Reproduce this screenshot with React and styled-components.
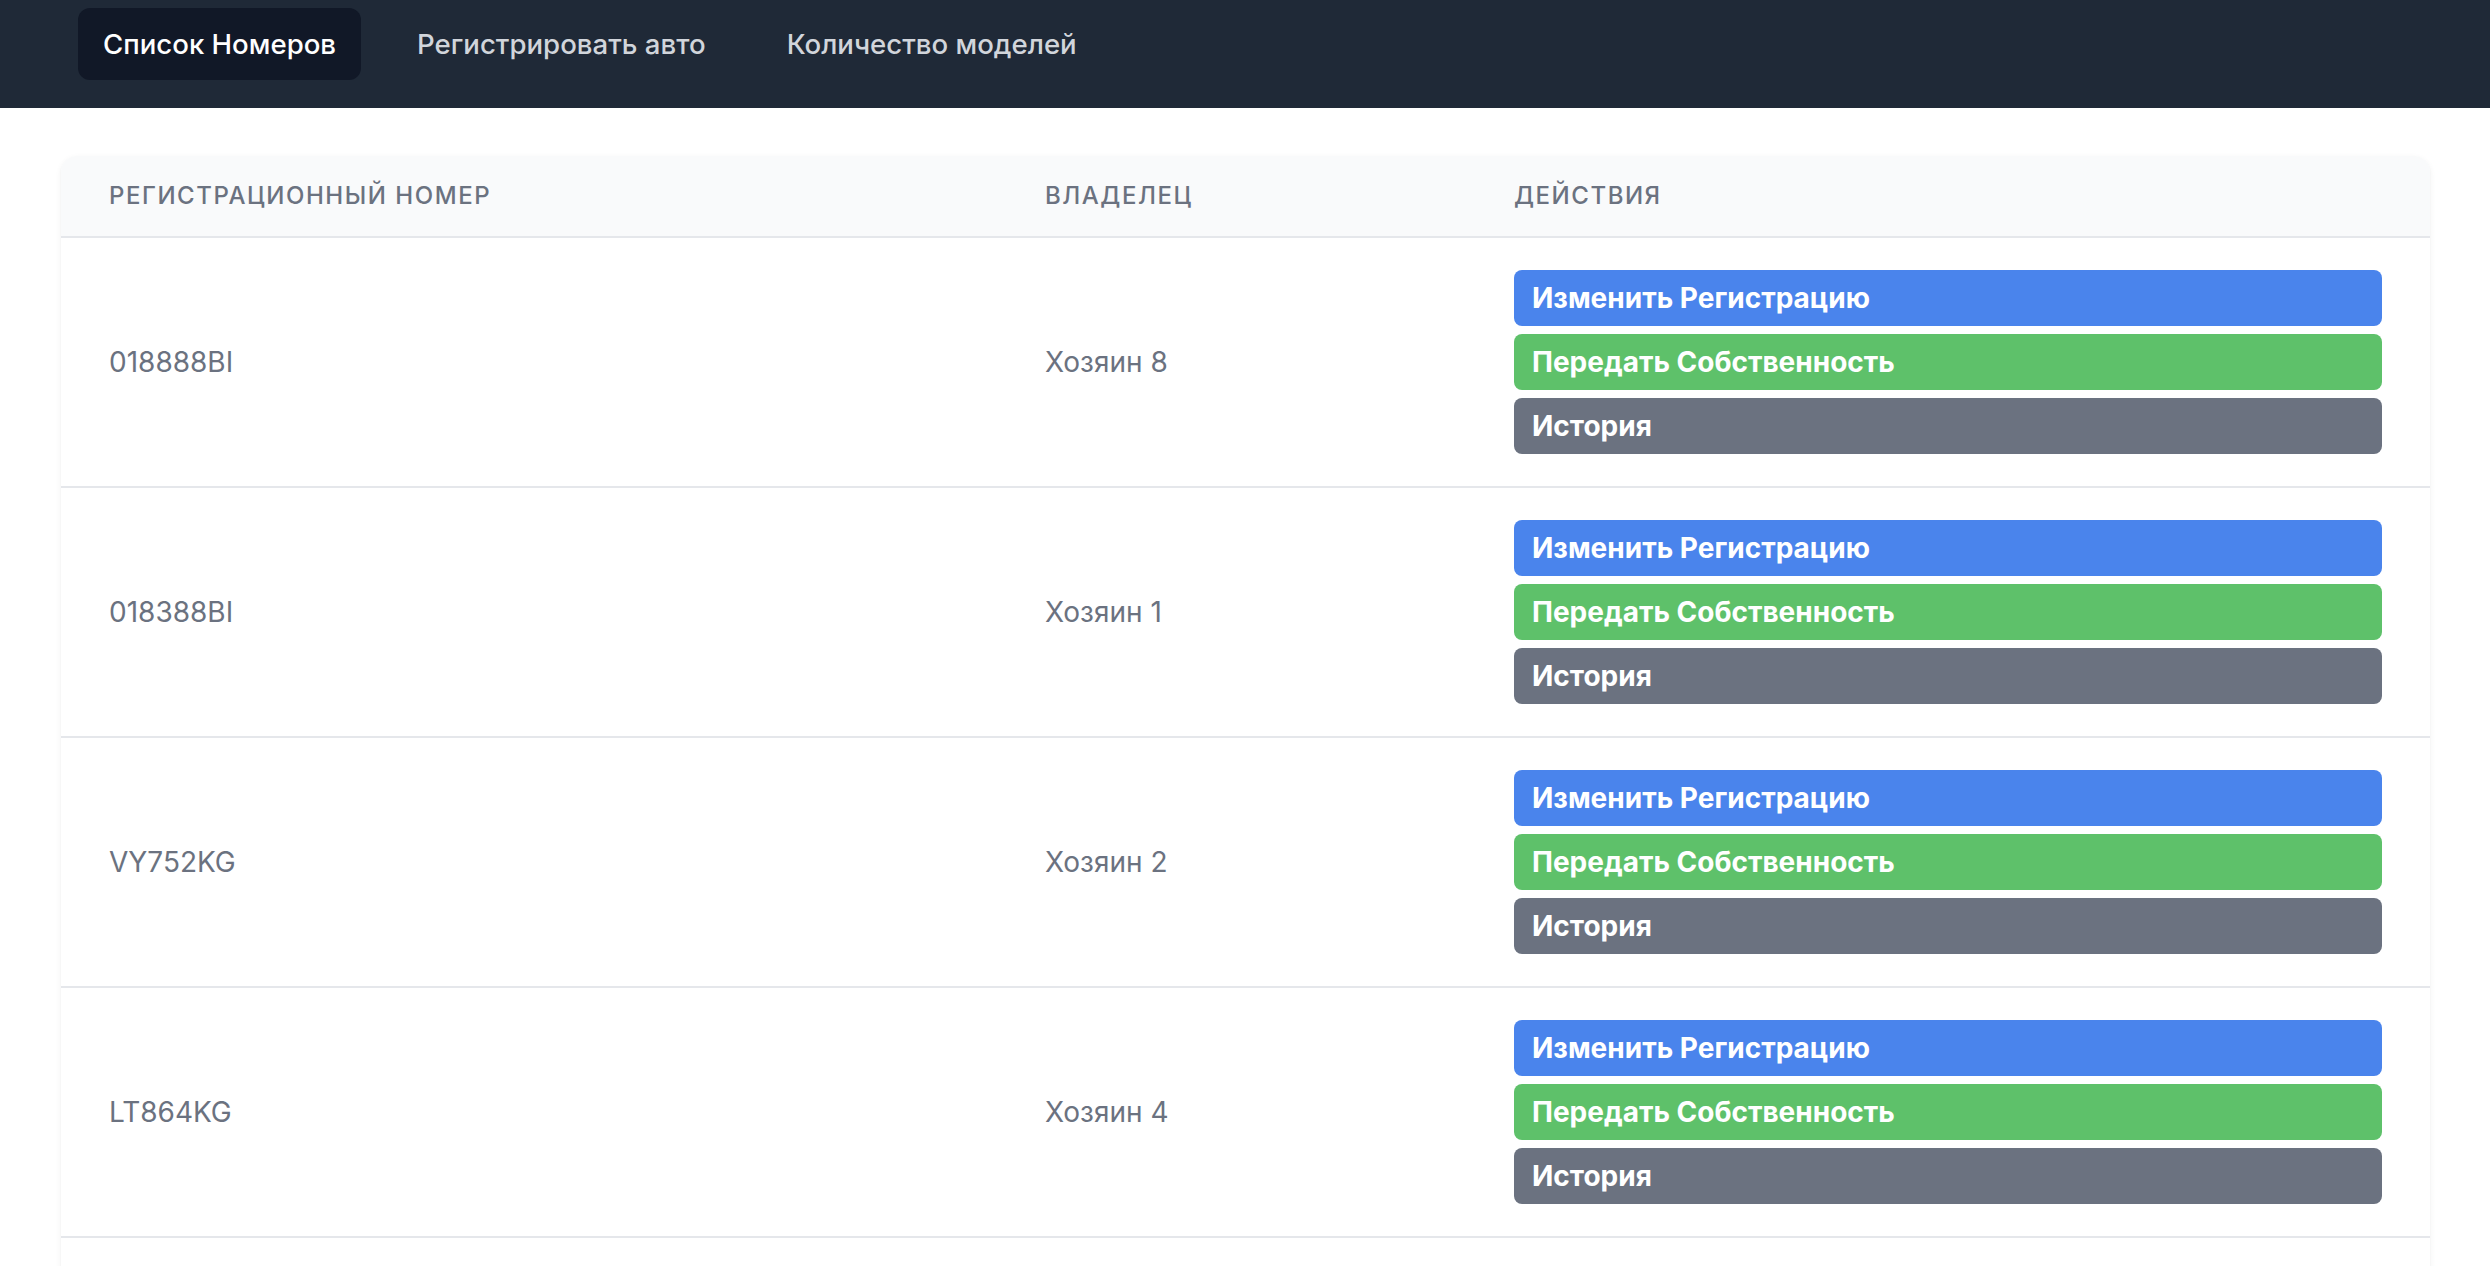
import React from "react";
import styled, { createGlobalStyle } from "styled-components";

const Global = createGlobalStyle`
  html, body { margin: 0; padding: 0; background: #ffffff; }
  body { font-family: Inter, "Noto Sans", "Liberation Sans", sans-serif; -webkit-font-smoothing: antialiased; }
  * { box-sizing: border-box; }
`;

const NavBar = styled.nav`
  height: 108px;
  background: #1f2937;
  display: flex;
  align-items: flex-start;
  padding: 8px 0 0 78px;
  gap: 31px;
`;

const NavLink = styled.a`
  height: 72px;
  display: flex;
  align-items: center;
  padding: 0 25px;
  border-radius: 12px;
  font-size: 27.6px;
  font-weight: 500;
  color: ${(p) => (p.$active ? "#ffffff" : "#d1d5db")};
  background: ${(p) => (p.$active ? "#111827" : "transparent")};
  text-decoration: none;
  cursor: pointer;
`;

const Main = styled.main`
  padding: 48px 60px 0 61px;
`;

const Card = styled.div`
  background: #ffffff;
  border-radius: 16px;
  box-shadow: 0 2px 6px rgba(0, 0, 0, 0.06), 0 1px 2px rgba(0, 0, 0, 0.04);
  overflow: hidden;
`;

const Table = styled.table`
  width: 100%;
  border-collapse: collapse;
  table-layout: fixed;
`;

const HeadRow = styled.tr`
  background: #f9fafb;
  border-bottom: 2px solid #e5e7eb;
`;

const Th = styled.th`
  height: 81px;
  padding: 0 48px 1px;
  text-align: left;
  font-size: 24px;
  font-weight: 500;
  letter-spacing: 0.064em;
  text-transform: uppercase;
  color: #6b7280;
  width: ${(p) => p.$w}px;
`;

const Row = styled.tr`
  border-bottom: 2px solid #e5e7eb;
`;

const Td = styled.td`
  padding: 32px 48px;
  vertical-align: middle;
  font-size: 28px;
  color: #6b7280;
`;

const Actions = styled.div`
  display: flex;
  flex-direction: column;
  gap: 8px;
`;

const colors = {
  blue: "#4a84ec",
  green: "#5ec16a",
  gray: "#6b7280",
};

const ActionButton = styled.button`
  height: 56px;
  width: 100%;
  border: none;
  border-radius: 8px;
  padding: 0 18px;
  text-align: left;
  font-family: inherit;
  font-size: 28px;
  font-weight: 700;
  color: #ffffff;
  background: ${(p) => colors[p.$tone]};
  cursor: pointer;
`;

const rows = [
  { plate: "018888BI", owner: "Хозяин 8" },
  { plate: "018388BI", owner: "Хозяин 1" },
  { plate: "VY752KG", owner: "Хозяин 2" },
  { plate: "LT864KG", owner: "Хозяин 4" },
  { plate: "KM431KG", owner: "Хозяин 3" },
];

export default function App() {
  return (
    <>
      <Global />
      <NavBar>
        <NavLink $active>Список Номеров</NavLink>
        <NavLink>Регистрировать авто</NavLink>
        <NavLink>Количество моделей</NavLink>
      </NavBar>
      <Main>
        <Card>
          <Table>
            <thead>
              <HeadRow>
                <Th $w={936}>Регистрационный номер</Th>
                <Th $w={469}>Владелец</Th>
                <Th>Действия</Th>
              </HeadRow>
            </thead>
            <tbody>
              {rows.map((r) => (
                <Row key={r.plate}>
                  <Td>{r.plate}</Td>
                  <Td>{r.owner}</Td>
                  <Td>
                    <Actions>
                      <ActionButton $tone="blue">Изменить Регистрацию</ActionButton>
                      <ActionButton $tone="green">Передать Собственность</ActionButton>
                      <ActionButton $tone="gray">История</ActionButton>
                    </Actions>
                  </Td>
                </Row>
              ))}
            </tbody>
          </Table>
        </Card>
      </Main>
    </>
  );
}
